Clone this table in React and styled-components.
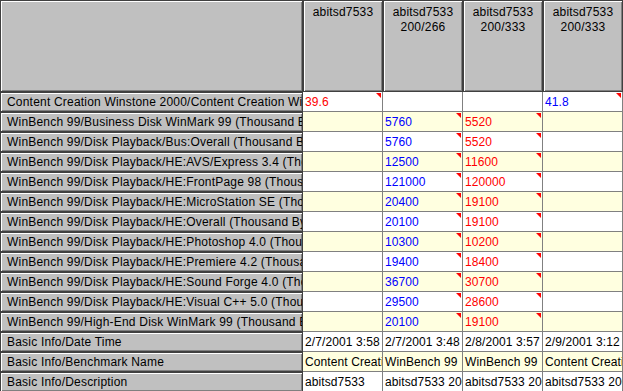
import React from 'react';
import styled, { createGlobalStyle, css } from 'styled-components';

const GlobalStyle = createGlobalStyle`
  body {
    margin: 0;
    background: #ffffff;
    font-family: 'Liberation Sans', Arial, sans-serif;
    font-size: 12px;
    letter-spacing: 0.2px;
    color: #000000;
    overflow: hidden;
  }
`;

// raised look shared by the corner, the column headers and the row headers
const bevel = css`
  box-sizing: border-box;
  background-color: #c0c0c0;
  border: 1px solid #404040;
  box-shadow: inset 1px 1px #ffffff, inset -1px -1px #808080;
`;

const Table = styled.div`
  display: grid;
  grid-template-columns: 303px repeat(4, 80px);
  grid-template-rows: 92px repeat(15, 20px);
  width: 623px;
  height: 391px;
  overflow: hidden;
`;

const Corner = styled.div`
  ${bevel}
`;

const ColHeader = styled.div`
  ${bevel}
  display: flex;
  flex-direction: column;
  align-items: center;
  padding-top: 4px;
  line-height: 15px;
  white-space: nowrap;
  overflow: hidden;
`;

const RowHeader = styled.div`
  ${bevel}
  padding: 0 3px 0 6px;
  line-height: 18px;
  white-space: nowrap;
  overflow: hidden;
`;

const Cell = styled.div`
  position: relative;
  box-sizing: border-box;
  background-color: ${(p) => (p.$alt ? '#ffffe0' : '#ffffff')};
  border-right: 1px solid #808080;
  border-bottom: 1px solid #808080;
  padding: 1px 2px 0 2px;
  line-height: 18px;
  letter-spacing: 0.1px;
  color: ${(p) => p.$color};
  white-space: nowrap;
  overflow: hidden;
`;

const Marker = styled.span`
  position: absolute;
  top: 1px;
  right: 1px;
  width: 0;
  height: 0;
  border-top: 5px solid #ff0000;
  border-left: 5px solid transparent;
`;

const RED = '#ff0000';
const BLUE = '#0000ff';
const BLACK = '#000000';

const columns = [
  ['abitsd7533'],
  ['abitsd7533', '200/266'],
  ['abitsd7533', '200/333'],
  ['abitsd7533', '200/333'],
];

const hd = 'WinBench 99/Disk Playback/HE:';

const rows = [
  { label: 'Content Creation Winstone 2000/Content Creation Winstone 2000', cells: [['39.6', RED], null, null, ['41.8', BLUE]] },
  { label: 'WinBench 99/Business Disk WinMark 99 (Thousand Bytes/s)', cells: [null, ['5760', BLUE], ['5520', RED], null] },
  { label: 'WinBench 99/Disk Playback/Bus:Overall (Thousand Bytes/s)', cells: [null, ['5760', BLUE], ['5520', RED], null] },
  { label: hd + 'AVS/Express 3.4 (Thousand Bytes/s)', cells: [null, ['12500', BLUE], ['11600', RED], null] },
  { label: hd + 'FrontPage 98 (Thousand Bytes/s)', cells: [null, ['121000', BLUE], ['120000', RED], null] },
  { label: hd + 'MicroStation SE (Thousand Bytes/s)', cells: [null, ['20400', BLUE], ['19100', RED], null] },
  { label: hd + 'Overall (Thousand Bytes/s)', cells: [null, ['20100', BLUE], ['19100', RED], null] },
  { label: hd + 'Photoshop 4.0 (Thousand Bytes/s)', cells: [null, ['10300', BLUE], ['10200', RED], null] },
  { label: hd + 'Premiere 4.2 (Thousand Bytes/s)', cells: [null, ['19400', BLUE], ['18400', RED], null] },
  { label: hd + 'Sound Forge 4.0 (Thousand Bytes/s)', cells: [null, ['36700', BLUE], ['30700', RED], null] },
  { label: hd + 'Visual C++ 5.0 (Thousand Bytes/s)', cells: [null, ['29500', BLUE], ['28600', RED], null] },
  { label: 'WinBench 99/High-End Disk WinMark 99 (Thousand Bytes/s)', cells: [null, ['20100', BLUE], ['19100', RED], null] },
  {
    label: 'Basic Info/Date Time',
    plain: true,
    cells: [['2/7/2001 3:58 PM'], ['2/7/2001 3:48 PM'], ['2/8/2001 3:57 PM'], ['2/9/2001 3:12 PM']],
  },
  {
    label: 'Basic Info/Benchmark Name',
    plain: true,
    cells: [['Content Creation Winstone 2000'], ['WinBench 99'], ['WinBench 99'], ['Content Creation Winstone 2000']],
  },
  {
    label: 'Basic Info/Description',
    plain: true,
    cells: [['abitsd7533'], ['abitsd7533 200/266'], ['abitsd7533 200/333'], ['abitsd7533 200/333']],
  },
];

function App() {
  return (
    <>
      <GlobalStyle />
      <Table>
        <Corner />
        {columns.map((lines, i) => (
          <ColHeader key={i}>
            {lines.map((l) => (
              <span key={l}>{l}</span>
            ))}
          </ColHeader>
        ))}
        {rows.map((row, r) => (
          <React.Fragment key={r}>
            <RowHeader>{row.label}</RowHeader>
            {row.cells.map((c, i) => (
              <Cell key={i} $alt={r % 2 === 1} $color={c && c[1] ? c[1] : BLACK}>
                {c ? c[0] : ''}
                {c && !row.plain && <Marker />}
              </Cell>
            ))}
          </React.Fragment>
        ))}
      </Table>
    </>
  );
}

export default App;
